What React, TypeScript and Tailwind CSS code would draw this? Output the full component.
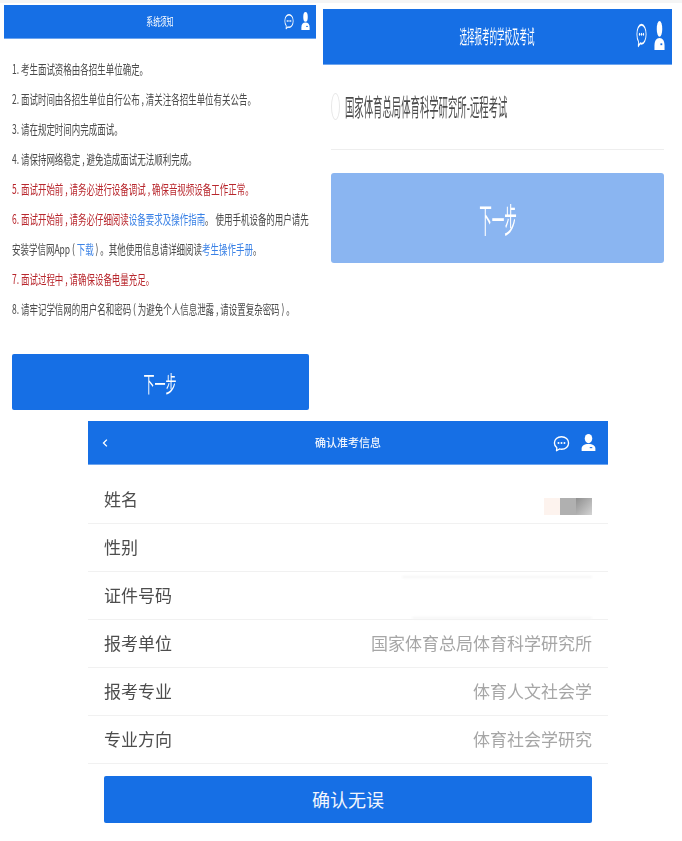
const BLUE = 'bg-[#166fe5]'

function ChatIcon({ className }: { className: string }) {
  return (
    <svg viewBox="0 0 24 24" preserveAspectRatio="none" fill="none" className={className}>
      <path d="M12 2.500c5.800 0 10 3.900 10 8.800s-4.200 8.800-10 8.800c-1 0-2-.1-2.900-.4L5 22.200l.4-4.200C3.300 16.400 2 14 2 11.300 2 6.400 6.200 2.500 12 2.500z" stroke="white" strokeWidth="1.900" strokeLinejoin="round" />
      <circle cx="7.800" cy="11.300" r="1.400" fill="white" />
      <circle cx="12" cy="11.300" r="1.400" fill="white" />
      <circle cx="16.200" cy="11.300" r="1.400" fill="white" />
    </svg>
  )
}

function UserIcon({ className }: { className: string }) {
  return (
    <svg viewBox="0 0 24 24" preserveAspectRatio="none" fill="white" className={className}>
      <ellipse cx="12" cy="6.500" rx="6" ry="6.500" />
      <path d="M1 24v-3.500C1 16.500 5 14 12 14s11 2.500 11 6.500V24z" />
      <rect x="14" y="18.500" width="4" height="1.500" fill="#166fe5" />
    </svg>
  )
}

const notices = [
  [{ t: '1. 考生面试资格由各招生单位确定。' }],
  [{ t: '2. 面试时间由各招生单位自行公布 , 清关注各招生单位有关公告。' }],
  [{ t: '3. 请在规定时间内完成面试。' }],
  [{ t: '4. 请保持网络稳定 , 避免造成面试无法顺利完成。' }],
  [{ t: '5. 面试开始前 , 请务必进行设备调试 , 确保音视频设备工作正常。', c: 'text-[#b8272d]' }],
  [
    { t: '6. 面试开始前 , 请务必仔细阅读', c: 'text-[#b8272d]' },
    { t: '设备要求及操作指南', c: 'text-[#3b82e6]' },
    { t: '。 使用手机设备的用户请先' },
  ],
  [
    { t: '安装学信网App ( ' },
    { t: '下载', c: 'text-[#3b82e6]' },
    { t: ' ) 。其他使用信息请详细阅读' },
    { t: '考生操作手册', c: 'text-[#3b82e6]' },
    { t: '。' },
  ],
  [{ t: '7. 面试过程中 , 请确保设备电量充足。', c: 'text-[#b8272d]' }],
  [{ t: '8. 请牢记学信网的用户名和密码 ( 为避免个人信息泄露 , 请设置复杂密码 ) 。' }],
]

const rows = [
  { label: '姓名', value: '' },
  { label: '性别', value: '' },
  { label: '证件号码', value: '' },
  { label: '报考单位', value: '国家体育总局体育科学研究所' },
  { label: '报考专业', value: '体育人文社会学' },
  { label: '专业方向', value: '体育社会学研究' },
]

export default function App() {
  return (
    <div className="w-[682px] h-[841px] overflow-hidden bg-white font-['Noto_Sans_CJK_SC','Noto_Sans',sans-serif]">
      <div className="h-[3px] bg-[#f5f5f5]" />

      <div className="flex items-start pl-1">
        {/* 系统须知 */}
        <div className="w-[312px] mt-[2px] blur-[0.3px]">
          <div className={`relative flex h-[34px] items-center justify-center ${BLUE} border-b border-[#6ea5ee]`}>
            <span className="shrink-0 whitespace-nowrap text-[11px] text-white scale-x-[0.62]">系统须知</span>
            <ChatIcon className="absolute left-[280px] top-[8px] w-[10px] h-[17px]" />
            <UserIcon className="absolute left-[297px] top-[7px] w-[9px] h-[18px]" />
          </div>
          <div className="mt-[15px] pl-2">
            {notices.map((line, i) => (
              <div key={i} className="flex h-[30px] items-center">
                <span className="shrink-0 origin-left whitespace-nowrap text-[13px] text-[#4a4a4a] scale-x-[0.652]">
                  {line.map((run, j) => (
                    <span key={j} className={run.c}>{run.t}</span>
                  ))}
                </span>
              </div>
            ))}
          </div>
          <div className={`mt-[30px] ml-2 flex h-[56px] w-[297px] items-center justify-center rounded-[2px] ${BLUE}`}>
            <span className="shrink-0 whitespace-nowrap text-[22px] text-white scale-x-[0.5]">下一步</span>
          </div>
        </div>

        {/* 选择报考的学校及考试 */}
        <div className="ml-[7px] w-[349px] mt-[6px] blur-[0.3px]">
          <div className={`relative flex h-[56px] items-center justify-center ${BLUE} border-b border-[#6ea5ee]`}>
            <span className="shrink-0 whitespace-nowrap text-[19px] text-white scale-x-[0.395]">选择报考的学校及考试</span>
            <ChatIcon className="absolute left-[313px] top-[13px] w-[11px] h-[26px]" />
            <UserIcon className="absolute left-[331px] top-[12px] w-[11px] h-[29px]" />
          </div>
          <div className="mx-2 flex h-[85px] items-center border-b border-[#eeeeee] pb-[2px]">
            <div className="h-[27px] w-[9px] shrink-0 rounded-[50%] border border-[#e8e8e8]" />
            <span className="ml-[5px] shrink-0 origin-left whitespace-nowrap text-[24px] text-[#4a4a4a] scale-x-[0.39]">国家体育总局体育科学研究所-远程考试</span>
          </div>
          <div className="mx-2 mt-[23px] flex h-[90px] items-center justify-center rounded-[3px] bg-[#8ab5f1]">
            <span className="shrink-0 whitespace-nowrap text-[34px] text-white scale-x-[0.37]">下一步</span>
          </div>
        </div>
      </div>

      {/* 确认准考信息 */}
      <div className="ml-[88px] mt-[11px] w-[520px]">
        <div className={`relative flex h-[44px] items-center justify-center ${BLUE} border-b border-[#6ea5ee]`}>
          <svg viewBox="0 0 8 12" fill="none" className="absolute left-[14px] top-[17px] w-[6px] h-[10px]">
            <path d="M6.500 1.500 2 6l4.500 4.500" stroke="white" strokeWidth="1.800" />
          </svg>
          <span className="text-[11px] font-medium text-[#eef4fd] blur-[0.3px]">确认准考信息</span>
          <ChatIcon className="absolute left-[465px] top-[14px] w-[17px] h-[17px]" />
          <UserIcon className="absolute left-[493px] top-[13px] w-[15px] h-[17px]" />
        </div>
        <div className="pt-[11px]">
          {rows.map((row) => (
            <div key={row.label} className="relative flex h-[48px] items-center justify-between border-b border-[#f1f1f1] px-4 pb-[2px] text-[17px] blur-[0.2px]">
              <span className="text-[#4d4d4d]">{row.label}</span>
              {row.value && <span className="text-[#a6a6a6]">{row.value}</span>}
              {row.label === '姓名' && (
                <div className="mt-[16px] flex">
                  <div className="h-[17px] w-4 bg-[#fdf3ee]" />
                  <div className="h-[17px] w-4 bg-[#b0b0b0]" />
                  <div className="h-[17px] w-4 bg-gradient-to-br from-[#8f8f8f] to-[#d4d4d4]" />
                </div>
              )}
              {row.label === '证件号码' && (
                <>
                  <div className="absolute right-[16px] top-[4px] h-[2px] w-[190px] bg-[#f6f6f6] blur-[1px]" />
                  <div className="absolute right-[16px] bottom-0 h-[2px] w-[180px] bg-[#f6f6f6] blur-[1px]" />
                </>
              )}
            </div>
          ))}
        </div>
        <div className={`mx-4 mt-3 flex h-[47px] items-center justify-center rounded-[2px] ${BLUE}`}>
          <span className="text-[18px] text-[#f2f6fd]">确认无误</span>
        </div>
      </div>
    </div>
  )
}
